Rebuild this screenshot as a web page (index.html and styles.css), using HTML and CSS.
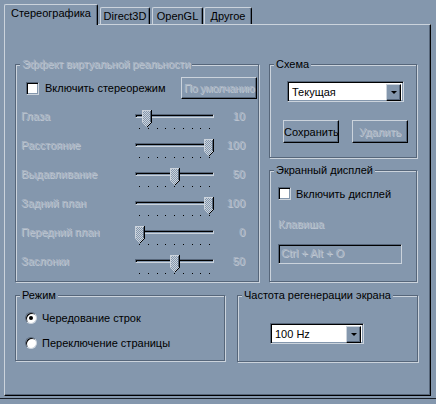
FILE: index.html
```html
<!DOCTYPE html>
<html lang="ru">
<head>
<meta charset="utf-8">
<title>Стереографика</title>
<link rel="stylesheet" href="styles.css">
</head>
<body>
<svg class="defs" width="0" height="0" aria-hidden="true">
  <defs>
    <pattern id="dither" width="2" height="2" patternUnits="userSpaceOnUse">
      <rect width="2" height="2" fill="#8497ad"/>
      <rect width="1" height="1" fill="#cbd3dc"/>
      <rect x="1" y="1" width="1" height="1" fill="#cbd3dc"/>
    </pattern>
    <symbol id="thumb" viewBox="0 0 10 17">
      <polygon points="0,0 10,0 10,12 5,17 0,12" fill="url(#dither)"/>
      <path d="M0.5 12 V0.5 H9" stroke="#cbd3dc" fill="none" shape-rendering="crispEdges"/>
      <path d="M0.5 12.5 L4.5 16.5" stroke="#cbd3dc" fill="none"/>
      <path d="M9.5 0 V12.5" stroke="#000" fill="none" shape-rendering="crispEdges"/>
      <path d="M9.5 12.5 L5 17" stroke="#000" fill="none"/>
      <path d="M8.5 1 V12" stroke="#56667a" fill="none" shape-rendering="crispEdges"/>
    </symbol>
  </defs>
</svg>
<div class="window">
  <div class="tabs">
    <div class="tab active t1">Стереографика</div>
    <div class="tab t2">Direct3D</div>
    <div class="tab t3">OpenGL</div>
    <div class="tab t4">Другое</div>
  </div>
  <div class="panel">
    <div class="top-row">
      <div class="group vr">
        <span class="legend dis">Эффект виртуальной реальности</span>
        <div class="vr-head">
          <span class="check"></span><span class="check-label">Включить стереорежим</span>
          <button class="btn defaults dis">По умолчанию</button>
        </div>
        <div class="slider-row">
          <span class="lbl dis">Глаза</span>
          <div class="slider"><div class="track"></div><div class="ticks"><i></i><i></i><i></i><i></i><i></i><i></i><i></i><i></i><i></i></div><svg class="thumb" width="10" height="17" style="left:7px"><use href="#thumb"/></svg></div>
          <span class="val dis">10</span>
        </div>
        <div class="slider-row">
          <span class="lbl dis">Расстояние</span>
          <div class="slider"><div class="track"></div><div class="ticks"><i></i><i></i><i></i><i></i><i></i><i></i><i></i><i></i><i></i></div><svg class="thumb" width="10" height="17" style="left:69px"><use href="#thumb"/></svg></div>
          <span class="val dis">100</span>
        </div>
        <div class="slider-row">
          <span class="lbl dis">Выдавливание</span>
          <div class="slider"><div class="track"></div><div class="ticks"><i></i><i></i><i></i><i></i><i></i><i></i><i></i><i></i><i></i></div><svg class="thumb" width="10" height="17" style="left:35px"><use href="#thumb"/></svg></div>
          <span class="val dis">50</span>
        </div>
        <div class="slider-row">
          <span class="lbl dis">Задний план</span>
          <div class="slider"><div class="track"></div><div class="ticks"><i></i><i></i><i></i><i></i><i></i><i></i><i></i><i></i><i></i></div><svg class="thumb" width="10" height="17" style="left:69px"><use href="#thumb"/></svg></div>
          <span class="val dis">100</span>
        </div>
        <div class="slider-row">
          <span class="lbl dis">Передний план</span>
          <div class="slider"><div class="track"></div><div class="ticks"><i></i><i></i><i></i><i></i><i></i><i></i><i></i><i></i><i></i></div><svg class="thumb" width="10" height="17" style="left:0px"><use href="#thumb"/></svg></div>
          <span class="val dis">0</span>
        </div>
        <div class="slider-row">
          <span class="lbl dis">Заслонки</span>
          <div class="slider"><div class="track"></div><div class="ticks"><i></i><i></i><i></i><i></i><i></i><i></i><i></i><i></i><i></i></div><svg class="thumb" width="10" height="17" style="left:35px"><use href="#thumb"/></svg></div>
          <span class="val dis">50</span>
        </div>
      </div>
      <div class="right-col">
        <div class="group scheme">
          <span class="legend">Схема</span>
          <div class="combo scheme-combo">
            <span class="combo-text">Текущая</span>
            <span class="combo-btn"><span class="arrow"></span></span>
          </div>
          <div class="btn-row">
            <button class="btn small">Сохранить</button>
            <button class="btn small dis">Удалить</button>
          </div>
        </div>
        <div class="group osd">
          <span class="legend">Экранный дисплей</span>
          <div class="osd-check">
            <span class="check"></span><span class="osd-label">Включить дисплей</span>
          </div>
          <div class="key-label dis">Клавиша</div>
          <div class="edit dis">Ctrl + Alt + O</div>
        </div>
      </div>
    </div>
    <div class="bottom-row">
      <div class="group mode">
        <span class="legend">Режим</span>
        <div class="radio-row first"><span class="radio on"></span><span>Чередование строк</span></div>
        <div class="radio-row"><span class="radio"></span><span>Переключение страницы</span></div>
      </div>
      <div class="group rate">
        <span class="legend">Частота регенерации экрана</span>
        <div class="combo rate-combo">
          <span class="combo-text">100 Hz</span>
          <span class="combo-btn"><span class="arrow"></span></span>
        </div>
      </div>
    </div>
  </div>
</div>
<div class="base-line"></div>
</body>
</html>
```

FILE: styles.css
```css
:root {
  --face: #8497ad;
  --light: #cbd3dc;
  --shadow: #56667a;
  --dark: #000;
}
* { box-sizing: border-box; }
html, body { margin: 0; padding: 0; }
body {
  width: 436px;
  height: 404px;
  overflow: hidden;
  background: var(--face);
  font-family: "Liberation Sans", Arial, sans-serif;
  font-size: 11px;
  color: #000;
}
.defs { position: absolute; width: 0; height: 0; }
.window { padding: 4px 0 0 4px; }

.tabs { display: flex; align-items: flex-end; height: 20px; }
.tab {
  height: 17px;
  padding-top: 2px;
  line-height: 13px;
  text-align: center;
  white-space: nowrap;
  border-left: 1px solid var(--light);
  border-top: 1px solid var(--light);
  border-right: 1px solid var(--dark);
  box-shadow: inset -1px 0 0 var(--shadow);
  border-radius: 2px 2px 0 0;
  background: var(--face);
}
.tab.active { height: 21px; margin-bottom: -1px; position: relative; z-index: 1; }
.t1 { width: 94px; }
.t2 { width: 50px; margin-left: 2px; }
.t3 { width: 51px; margin-left: 2px; }
.t4 { width: 48px; margin-left: 1px; }

.panel {
  width: 427px;
  height: 372px;
  border: 1px solid;
  border-color: var(--light) var(--dark) var(--dark) var(--light);
  box-shadow: inset -1px -1px 0 var(--shadow);
  padding: 39px 0 0 10px;
}
.top-row { display: flex; align-items: flex-start; }
.bottom-row { display: flex; align-items: flex-start; margin-top: 13px; }

.group {
  position: relative;
  border: 1px solid var(--shadow);
  box-shadow: inset 1px 1px 0 var(--light), 1px 1px 0 var(--light);
}
.legend {
  position: absolute;
  top: -7px;
  left: 4px;
  padding: 0 2px;
  line-height: 13px;
  background: var(--face);
  white-space: nowrap;
}
.vr .legend { letter-spacing: -0.15px; }
.dis { color: #a9b4c3; text-shadow: 1px 1px 0 #bfc8d3; }

.vr { width: 244px; height: 218px; }
.vr-head {
  display: flex;
  align-items: center;
  height: 22px;
  margin-top: 12px;
  padding-left: 10px;
}
.check {
  flex: none;
  width: 13px;
  height: 13px;
  border: 1px solid;
  border-color: var(--shadow) var(--light) var(--light) var(--shadow);
  background: #fff;
  box-shadow: inset 1px 1px 0 var(--dark), inset -1px -1px 0 var(--face);
}
.check-label { margin-left: 6px; white-space: nowrap; }
.btn {
  font: inherit;
  background: var(--face);
  border: 1px solid;
  border-color: var(--light) var(--dark) var(--dark) var(--light);
  box-shadow: inset -1px -1px 0 var(--shadow);
  padding: 0;
  color: #000;
  white-space: nowrap;
  overflow: visible;
}
.btn.dis { color: #a9b4c3; }
.defaults { margin-left: auto; margin-right: 1px; width: 76px; height: 22px; letter-spacing: -0.35px; }

.slider-row {
  display: grid;
  grid-template-columns: 114px 79px 31px;
  height: 29px;
  padding-left: 5px;
}
.vr-head + .slider-row { margin-top: 10px; }
.slider-row > span { line-height: 14px; white-space: nowrap; }
.val { text-align: right; }
.slider { position: relative; }
.track {
  margin-top: 5px;
  height: 4px;
  border: 1px solid;
  border-color: var(--shadow) var(--light) var(--light) var(--shadow);
  box-shadow: inset 1px 1px 0 var(--dark);
}
.ticks {
  margin-top: 10px;
  display: flex;
  justify-content: space-between;
  padding: 0 4px;
  height: 1px;
}
.ticks i { width: 1px; height: 1px; background: #000; }
.thumb { position: absolute; top: 1px; display: block; }

.right-col { margin-left: 10px; width: 148px; }
.scheme { height: 94px; }
.combo {
  display: flex;
  height: 21px;
  padding: 2px;
  border: 1px solid;
  border-color: var(--shadow) var(--light) var(--light) var(--shadow);
  box-shadow: inset 1px 1px 0 var(--dark), inset -1px -1px 0 var(--face);
  background: #fff;
}
.combo-text { flex: 1; padding-left: 2px; line-height: 17px; white-space: nowrap; }
.combo-btn {
  flex: none;
  width: 15px;
  height: 17px;
  background: var(--face);
  border: 1px solid;
  border-color: var(--light) var(--dark) var(--dark) var(--light);
  box-shadow: inset -1px -1px 0 var(--shadow);
  display: flex;
  align-items: center;
  justify-content: center;
}
.arrow {
  width: 0;
  height: 0;
  border-left: 3px solid transparent;
  border-right: 3px solid transparent;
  border-top: 3px solid #000;
}
.scheme-combo { margin: 16px 0 0 17px; width: 117px; }
.btn-row { display: flex; gap: 13px; margin-top: 18px; padding-left: 13px; }
.btn.small { width: 56px; height: 23px; }

.osd { margin-top: 12px; height: 112px; }
.osd-check { display: flex; align-items: center; margin: 16px 0 0 8px; height: 13px; }
.osd-label { margin-left: 5px; white-space: nowrap; }
.key-label { margin: 17px 0 0 8px; line-height: 14px; }
.edit {
  margin: 13px 0 0 8px;
  width: 124px;
  height: 20px;
  padding-left: 2px;
  line-height: 16px;
  border: 1px solid;
  border-color: var(--shadow) var(--light) var(--light) var(--shadow);
  box-shadow: inset 1px 1px 0 var(--dark), inset -1px -1px 0 var(--face);
  white-space: nowrap;
}

.mode { width: 210px; height: 66px; }
.radio-row { display: flex; align-items: center; gap: 5px; height: 12px; margin: 13px 0 0 9px; white-space: nowrap; }
.radio-row.first { margin-top: 16px; }
.radio {
  flex: none;
  position: relative;
  width: 12px;
  height: 12px;
  border-radius: 50%;
  background: #fff;
  border: 1px solid;
  border-color: var(--shadow) var(--light) var(--light) var(--shadow);
  box-shadow: inset 1px 1px 0 var(--dark);
}
.radio.on::after {
  content: "";
  position: absolute;
  left: 3px;
  top: 3px;
  width: 4px;
  height: 4px;
  border-radius: 50%;
  background: #000;
}
.rate { margin-left: 12px; width: 181px; height: 67px; }
.rate-combo { margin: 27px 0 0 32px; width: 94px; }

.base-line { margin-top: 2px; height: 1px; background: #1c222a; }
```
